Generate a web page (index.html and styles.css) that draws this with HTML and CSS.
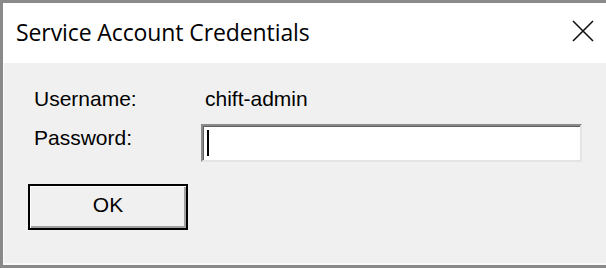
FILE: index.html
```html
<!DOCTYPE html>
<html>
<head>
<meta charset="utf-8">
<link rel="stylesheet" href="styles.css">
</head>
<body>
<div class="window">
  <div class="titlebar">
    <span class="title">Service Account Credentials</span>
    <svg class="close" width="22" height="22" viewBox="0 0 22 22"><path d="M1 1 L21 21 M21 1 L1 21" stroke="#111" stroke-width="1.6" fill="none"/></svg>
  </div>
  <div class="content">
    <div class="form">
      <span class="label">Username:</span>
      <span class="value">chift-admin</span>
      <span class="label">Password:</span>
      <div class="textbox"><span class="caret"></span></div>
    </div>
    <div class="button">OK</div>
  </div>
</div>
</body>
</html>
```
FILE: styles.css
```css
html, body {
  margin: 0;
  padding: 0;
}
body {
  width: 606px;
  height: 268px;
  overflow: hidden;
  background: #f0f0f0;
}
.window {
  box-sizing: border-box;
  width: 609px;
  height: 268px;
  border: 3px solid #8a8a8a;
  border-right: none;
  display: flex;
  flex-direction: column;
  background: #f0f0f0;
}
.titlebar {
  height: 60px;
  background: #fff;
  display: flex;
  align-items: center;
  justify-content: space-between;
  padding-left: 13px;
  padding-right: 15px;
  flex: none;
}
.title {
  font-family: "Open Sans", "Noto Sans", sans-serif;
  font-size: 23px;
  color: #000;
  margin-top: -2px;
  letter-spacing: -0.1px;
}
.close {
  margin-top: -4px;
}
.content {
  flex: 1;
  padding: 22px 0 0 30px;
  border-bottom: 2px solid #fafafa;
  border-left: 1px solid #fafafa;
  font-family: "Liberation Sans", Arial, sans-serif;
  font-size: 21px;
  color: #000;
}
.form {
  display: grid;
  grid-template-columns: 167px 381px;
  row-gap: 13px;
  align-items: start;
  line-height: 24px;
}
.label, .value {
  padding-top: 2px;
}
.value {
  padding-left: 4px;
}
.textbox {
  box-sizing: border-box;
  height: 38px;
  background: #fff;
  border-top: 2px solid #8a8a8a;
  border-left: 2px solid #8a8a8a;
  border-right: 2px solid #e4e4e4;
  border-bottom: 2px solid #e4e4e4;
  box-shadow: inset 1px 1px 0 #5f5f5f;
  display: flex;
  align-items: center;
  padding-left: 4px;
}
.caret {
  width: 2px;
  height: 26px;
  background: #000;
}
.button {
  box-sizing: border-box;
  margin: 22px 0 0 -6px;
  width: 160px;
  height: 46px;
  border: 2px solid #000;
  background: #f0f0f0;
  box-shadow: inset 1px 1px 0 #fff, inset -2px -2px 0 #a0a0a0;
  display: flex;
  align-items: center;
  justify-content: center;
  padding-bottom: 5px;
}
```
